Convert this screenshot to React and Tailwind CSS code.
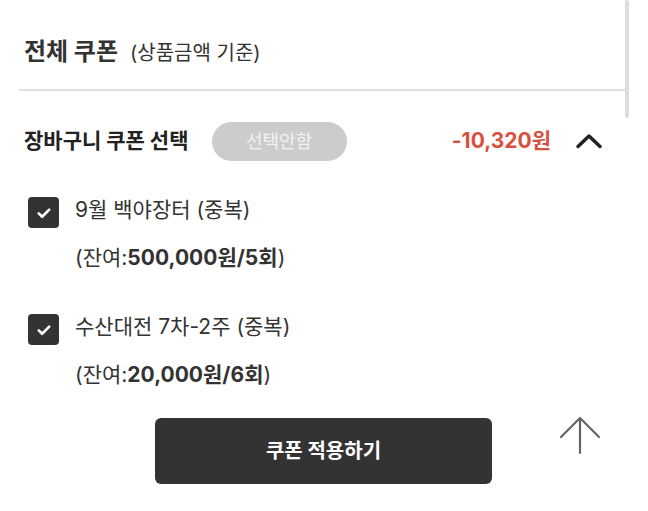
const font = { fontFamily: 'Inter, "Noto Sans CJK KR", sans-serif' }

function CheckBox() {
    return (
        <div className="w-[31px] h-[31px] rounded-[4px] bg-[#333333] flex items-center justify-center shrink-0">
            <svg width="18" height="18" viewBox="0 0 24 24" fill="none" stroke="white" strokeWidth="3.5" strokeLinecap="round" strokeLinejoin="round">
                <path d="M5 12.5l4.5 4.5L19 7.5" />
            </svg>
        </div>
    )
}

function CouponItem({ name, amount, count }) {
    return (
        <div className="flex flex-col">
            <div className="flex items-center gap-4 pl-7 h-[31px]">
                <CheckBox />
                <span className="text-[21px] leading-[28px] pb-[5px] text-[#333333]">{name}</span>
            </div>
            <div className="pl-[75px] mt-[16px] text-[21px] leading-[28px] text-[#333333]">
                (잔여:<b className="font-bold">{amount}원/{count}회</b>)
            </div>
        </div>
    )
}

export default function App() {
    return (
        <div className="relative w-[648px] h-[511px] bg-white overflow-hidden" style={font}>
            <div className="absolute left-[625px] top-0 w-[4px] h-[118px] bg-[#dddddd] rounded-full" />

            <div className="pl-6 pr-[23px]">
                <div className="flex items-baseline gap-3 pt-[36px] pb-[20px] border-b-2 border-[#e0e0e0] -ml-[5px] pl-[5px]">
                    <h2 className="text-[24px] leading-[32px] font-bold text-[#333333]">전체 쿠폰</h2>
                    <span className="text-[20px] leading-[32px] text-[#333333]">(상품금액 기준)</span>
                </div>

                <div className="flex items-center h-[40px] mt-[30px]">
                    <span className="text-[21px] font-bold text-[#222222]">장바구니 쿠폰 선택</span>
                    <div className="ml-[23px] w-[135px] h-[39px] rounded-full bg-[#cccccc] flex items-center justify-center text-[18px] text-[#f2f2f2]">
                        선택안함
                    </div>
                    <span className="ml-auto text-[21px] font-bold text-[#d9503f]">-10,320원</span>
                    <svg className="ml-[24px] mr-[22px]" width="28" height="16" viewBox="0 0 28 16" fill="none" stroke="#222222" strokeWidth="3.5" strokeLinecap="round" strokeLinejoin="round">
                        <path d="M3 13.5L14 3l11 10.5" />
                    </svg>
                </div>
            </div>

            <div className="flex flex-col gap-[42px] mt-[36px]">
                <CouponItem name="9월 백야장터 (중복)" amount="500,000" count="5" />
                <CouponItem name="수산대전 7차-2주 (중복)" amount="20,000" count="6" />
            </div>

            <div className="flex items-center mt-[29px]">
                <button className="ml-[155px] w-[337px] h-[66px] rounded-[6px] bg-[#333333] text-white text-[20px] font-bold">
                    쿠폰 적용하기
                </button>
                <svg className="ml-[66px] -mt-[30px]" width="44" height="44" viewBox="0 0 44 44" fill="none" stroke="#666666" strokeWidth="2.2" strokeLinecap="round" strokeLinejoin="round">
                    <path d="M22 39V5M3 23L22 4l19 19" />
                </svg>
            </div>
        </div>
    )
}
